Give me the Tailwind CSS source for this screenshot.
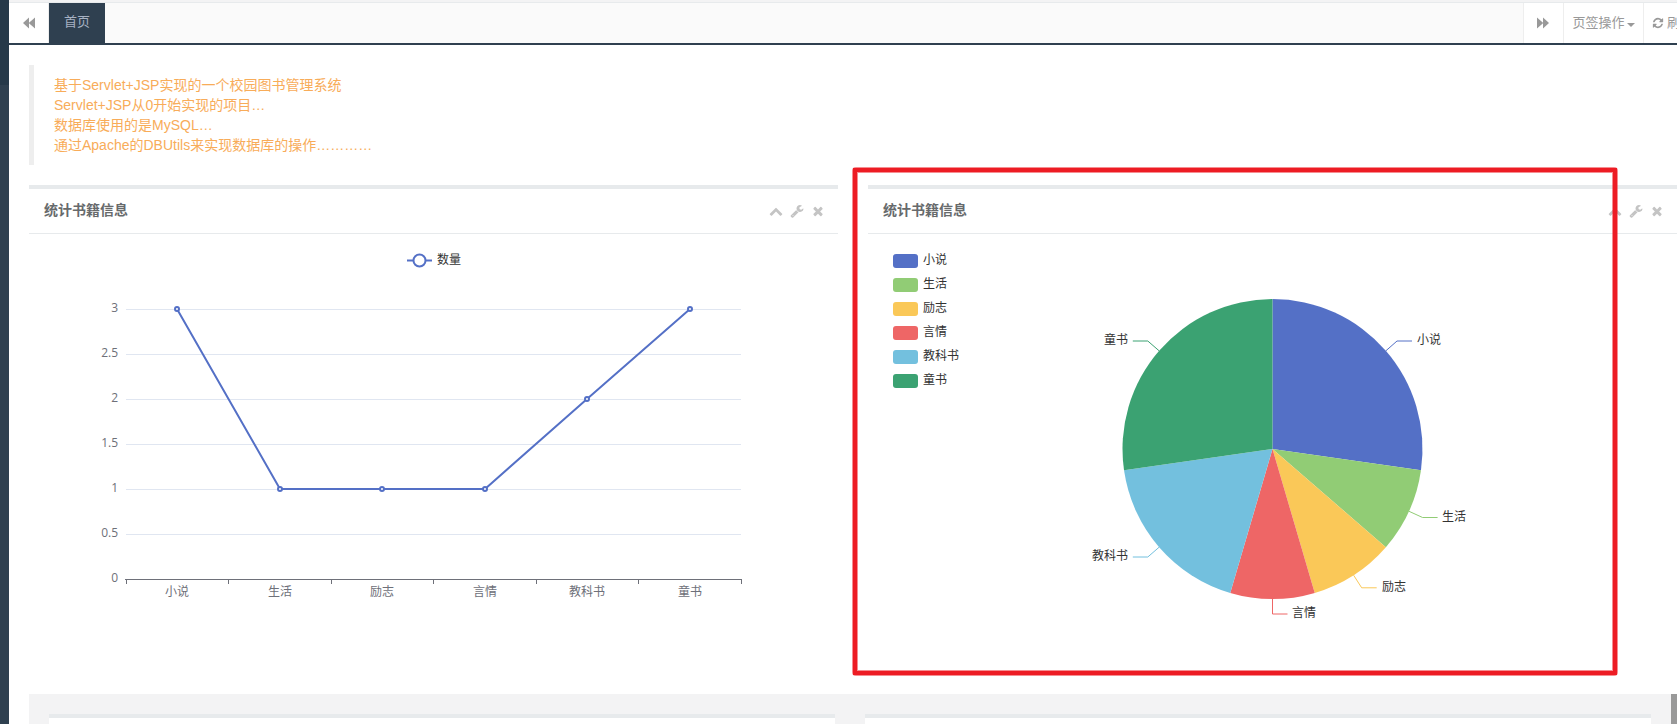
<!DOCTYPE html>
<html lang="zh-CN">
<head>
<meta charset="utf-8">
<title>首页</title>
<script src="https://cdn.jsdelivr.net/npm/@tailwindcss/browser@4"></script>
</head>
<body class="h-screen overflow-hidden bg-white font-['Liberation_Sans','Noto_Sans_CJK_SC',sans-serif] text-sm text-[#676a6c]">
<svg class="hidden" xmlns="http://www.w3.org/2000/svg">
  <symbol id="chevron" viewBox="0 0 1792 1792"><path d="M1683 1331l-166 165q-19 19-45 19t-45-19l-531-531-531 531q-19 19-45 19t-45-19l-166-165q-19-19-19-45.500t19-45.500l742-741q19-19 45-19t45 19l742 741q19 19 19 45.500t-19 45.500z"/></symbol>
  <symbol id="wrench" viewBox="0 0 1792 1792"><path d="M448 1472q0-26-19-45t-45-19-45 19-19 45 19 45 45 19 45-19 19-45zm644-420l-682 682q-37 37-90 37-52 0-91-37l-106-108q-38-36-38-90 0-53 38-91l681-681q39 98 114.500 173.500t173.500 114.500zm634-435q0 39-23 106-47 134-164.500 217.500t-258.500 83.500q-185 0-316.500-131.500t-131.500-316.500 131.500-316.500 316.500-131.500q58 0 121.500 16.500t107.500 46.500q16 11 16 28t-16 28l-293 169v224l193 107q5-3 79-48.500t135.500-81 70.500-35.500q15 0 23.500 10t8.500 25z"/></symbol>
  <symbol id="times" viewBox="0 0 1792 1792"><path d="M1490 1322q0 40-28 68l-136 136q-28 28-68 28t-68-28l-294-294-294 294q-28 28-68 28t-68-28l-136-136q-28-28-28-68t28-68l294-294-294-294q-28-28-28-68t28-68l136-136q28-28 68-28t68 28l294 294 294-294q28-28 68-28t68 28l136 136q28 28 28 68t-28 68l-294 294 294 294q28 28 28 68z"/></symbol>
  <symbol id="forward" viewBox="0 0 14 14"><path d="M1 1.500v11L7 7.300v5.200L13 7 7 1.500v5.200z"/></symbol>
</svg>

<div class="flex h-full">
  <aside class="w-[9px] shrink-0 bg-[#2f4050]"><div class="h-[85px] bg-[#263949]"></div></aside>

  <div class="flex min-w-0 flex-1 flex-col">
    <div class="h-[3px] shrink-0 border-b border-[#e7eaec] bg-[#f3f3f4]"></div>
    <nav class="flex h-[42px] shrink-0 overflow-hidden border-b-2 border-[#2f4050] bg-[#fafafa] text-[#999]">
      <button aria-label="向左" class="flex w-10 shrink-0 items-center justify-center border-r border-[#eee] bg-white"><svg class="size-[14px] rotate-180 fill-current"><use href="#forward"/></svg></button>
      <a href="#" class="w-14 shrink-0 bg-[#2f4050] text-center text-[13px] leading-[38px] text-[#a7b1c2]">首页</a>
      <div class="flex-1 border-r border-[#eee]"></div>
      <button aria-label="向右" class="flex w-10 shrink-0 items-center justify-center border-r border-[#eee] bg-white pr-[2px]"><svg class="size-[14px] fill-current"><use href="#forward"/></svg></button>
      <button class="flex w-20 shrink-0 items-center justify-center gap-[2px] border-r border-[#eee] bg-white text-[13px] leading-[38px]">页签操作<span class="mt-1 border-x-4 border-t-4 border-x-transparent border-t-[#999]"></span></button>
      <div class="w-[33px] shrink-0 overflow-hidden bg-white">
        <button class="flex h-full w-[60px] items-center gap-[3px] pl-2 text-[13px] leading-[38px]"><svg class="size-3 shrink-0 fill-current" viewBox="0 0 1792 1792"><path d="M1639 1056q0 5-1 7-64 268-268 434.500t-478 166.500q-146 0-282.500-55t-243.500-157l-129 129q-19 19-45 19t-45-19-19-45v-448q0-26 19-45t45-19h448q26 0 45 19t19 45-19 45l-137 137q71 66 161 102t187 36q134 0 250-65t186-179q11-17 53-117 8-23 30-23h192q13 0 22.500 9.500t9.500 22.500zm25-800v448q0 26-19 45t-45 19h-448q-26 0-45-19t-19-45 19-45l138-138q-148-137-349-137-134 0-250 65t-186 179q-11 17-53 117-8 23-30 23h-199q-13 0-22.500-9.500t-9.500-22.500v-7q65-268 270-434.500t480-166.500q146 0 284 55.500t245 156.500l130-129q19-19 45-19t45 19 19 45z"/></svg>刷新</button>
      </div>
    </nav>

    <main class="flex min-h-0 flex-1 flex-col overflow-hidden pl-5 pt-5">
      <blockquote class="shrink-0 border-l-[5px] border-[#eee] px-5 py-[10px] leading-5 text-[#f8ac59]">
        基于Servlet+JSP实现的一个校园图书管理系统<br>Servlet+JSP从0开始实现的项目…<br>数据库使用的是MySQL…<br>通过Apache的DBUtils来实现数据库的操作…………
      </blockquote>

      <div class="mt-5 grid shrink-0 grid-cols-2 gap-[30px]">
        <section class="h-[509px] border-t-4 border-[#e7eaec]">
          <header class="flex h-[45px] items-center justify-between border-b border-[#e7eaec] pl-[15px] pr-[13px]">
            <h5 class="pb-[2px] font-bold leading-5">统计书籍信息</h5>
            <div class="flex gap-[7px] text-[#c4c4c4]">
              <button aria-label="折叠"><svg class="size-[14px] fill-current"><use href="#chevron"/></svg></button>
              <button aria-label="设置"><svg class="size-[14px] fill-current"><use href="#wrench"/></svg></button>
              <button aria-label="关闭"><svg class="size-[14px] fill-current"><use href="#times"/></svg></button>
            </div>
          </header>
          <div class="px-5 pt-[15px]">
            <svg class="h-[400px] w-full font-['Open_Sans','Noto_Sans_CJK_SC',sans-serif] text-xs" viewBox="0 0 769 400">
              <g stroke="#5470c6" stroke-width="2" fill="#fff"><path d="M358 11.500h25"/><circle cx="370.500" cy="11.500" r="6"/></g>
              <text x="388" y="15" fill="#333">数量</text>
              <path d="M77 60.500h615M77 105.500h615M77 150.500h615M77 195.500h615M77 240.500h615M77 285.500h615" stroke="#e0e6f1"/>
              <path d="M76 330.500h617M77.500 331v4M179.500 331v4M282.500 331v4M384.500 331v4M487.500 331v4M589.500 331v4M692.500 331v4" stroke="#6e7079"/>
              <g fill="#6e7079" text-anchor="end">
                <text x="69" y="63">3</text><text x="69" y="108">2.5</text><text x="69" y="153">2</text><text x="69" y="198">1.5</text><text x="69" y="243">1</text><text x="69" y="288">0.5</text><text x="69" y="333">0</text>
              </g>
              <g fill="#6e7079" text-anchor="middle">
                <text x="128" y="347">小说</text><text x="231" y="347">生活</text><text x="333" y="347">励志</text><text x="436" y="347">言情</text><text x="538" y="347">教科书</text><text x="641" y="347">童书</text>
              </g>
              <g stroke="#5470c6" stroke-width="2" fill="#fff">
                <path fill="none" stroke-linejoin="bevel" d="M128 60L231 240H436L538 150L641 60"/>
                <circle cx="128" cy="60" r="2"/><circle cx="231" cy="240" r="2"/><circle cx="333" cy="240" r="2"/><circle cx="436" cy="240" r="2"/><circle cx="538" cy="150" r="2"/><circle cx="641" cy="60" r="2"/>
              </g>
            </svg>
          </div>
        </section>

        <section class="relative h-[509px] border-t-4 border-[#e7eaec]">
          <header class="flex h-[45px] items-center justify-between border-b border-[#e7eaec] pl-[15px] pr-[13px]">
            <h5 class="pb-[2px] font-bold leading-5">统计书籍信息</h5>
            <div class="flex gap-[7px] text-[#c4c4c4]">
              <button aria-label="折叠"><svg class="size-[14px] fill-current"><use href="#chevron"/></svg></button>
              <button aria-label="设置"><svg class="size-[14px] fill-current"><use href="#wrench"/></svg></button>
              <button aria-label="关闭"><svg class="size-[14px] fill-current"><use href="#times"/></svg></button>
            </div>
          </header>
          <div class="px-5 pt-[15px]">
            <svg class="h-[400px] w-full font-['Open_Sans','Noto_Sans_CJK_SC',sans-serif] text-xs" viewBox="0 0 769 400">
              <rect x="5" y="5" width="25" height="14" rx="3" fill="#5470c6"/><rect x="5" y="29" width="25" height="14" rx="3" fill="#91cc75"/><rect x="5" y="53" width="25" height="14" rx="3" fill="#fac858"/><rect x="5" y="77" width="25" height="14" rx="3" fill="#ee6666"/><rect x="5" y="101" width="25" height="14" rx="3" fill="#73c0de"/><rect x="5" y="125" width="25" height="14" rx="3" fill="#3ba272"/>
              <g fill="#333">
                <text x="35" y="15">小说</text><text x="35" y="39">生活</text><text x="35" y="63">励志</text><text x="35" y="87">言情</text><text x="35" y="111">教科书</text><text x="35" y="135">童书</text>
                <text x="529" y="95">小说</text><text x="554" y="272">生活</text><text x="494" y="342">励志</text><text x="404" y="368">言情</text><text x="240" y="311" text-anchor="end">教科书</text><text x="240" y="95" text-anchor="end">童书</text>
              </g>
              <path fill="#5470c6" d="M384.500 200V50A150 150 0 0 1 532.970 221.350z"/>
              <path fill="#91cc75" d="M384.500 200L532.970 221.350A150 150 0 0 1 497.860 298.230z"/>
              <path fill="#fac858" d="M384.500 200L497.860 298.230A150 150 0 0 1 426.760 343.920z"/>
              <path fill="#ee6666" d="M384.500 200L426.760 343.920A150 150 0 0 1 342.240 343.920z"/>
              <path fill="#73c0de" d="M384.500 200L342.240 343.920A150 150 0 0 1 236.030 221.350z"/>
              <path fill="#3ba272" d="M384.500 200L236.030 221.350A150 150 0 0 1 384.500 50z"/>
              <g fill="none">
                <path stroke="#5470c6" d="M497.900 101.800L509 92H524"/>
                <path stroke="#91cc75" d="M521 262.300L534.600 268.500H549.600"/>
                <path stroke="#fac858" d="M465.600 326.200L473.700 338.800H488.700"/>
                <path stroke="#ee6666" d="M384.500 350V365H399.500"/>
                <path stroke="#73c0de" d="M271.100 298.200L259.800 308H244.800"/>
                <path stroke="#3ba272" d="M271.100 101.800L259.800 92H244.800"/>
              </g>
            </svg>
          </div>
          <div class="pointer-events-none absolute -left-4 -top-[22px] right-[59px] h-[509px] rounded-sm border-[6px] border-[#ed1c24]/50"></div>
          <div class="pointer-events-none absolute -left-[15px] -top-[21px] right-[60px] h-[507px] border-4 border-[#ed1c24]"></div>
        </section>
      </div>

      <div class="flex min-h-0 flex-1 bg-[#f3f3f4]">
        <div class="grid flex-1 grid-cols-2 gap-[30px] px-5 pt-5">
          <section class="border-t-4 border-[#e7eaec] bg-white"></section>
          <section class="border-t-4 border-[#e7eaec] bg-white"></section>
        </div>
        <div class="w-[6px] bg-[#999]"></div>
      </div>
    </main>
  </div>
</div>
</body>
</html>
